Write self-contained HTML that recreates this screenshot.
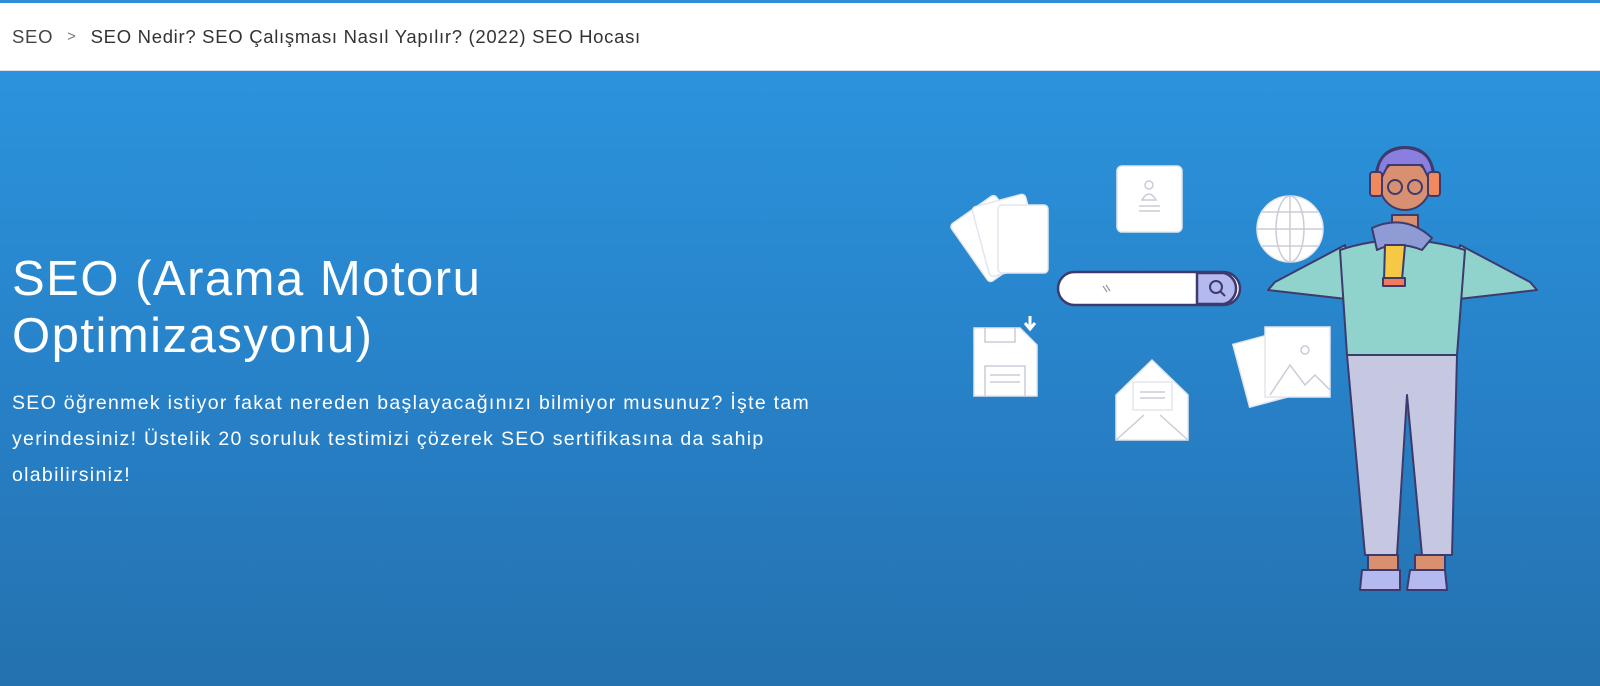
<!DOCTYPE html>
<html><head><meta charset="utf-8"><style>
*{margin:0;padding:0;box-sizing:border-box}
body{width:1600px;height:686px;overflow:hidden;font-family:"Liberation Sans",sans-serif;background:#fff}
.top{height:3px;background:#2e8fd6}
.hdr{height:68px;background:#fff;border-bottom:1px solid #dde3ea;display:flex;align-items:center;padding-left:12px;font-size:18.5px;color:#444;letter-spacing:.7px}
.hdr .sep{margin:0 14px;color:#777;font-size:15px}
.hdr b{font-weight:normal;color:#333}
.hero{position:absolute;top:71px;left:0;width:1600px;height:615px;background:linear-gradient(180deg,#2b93dc 0%,#2780c6 55%,#2471ae 100%)}
h1{position:absolute;left:12px;top:180px;color:#fff;font-weight:normal;font-size:49px;line-height:57px;letter-spacing:1.5px}
p{position:absolute;left:12px;top:314px;width:850px;color:#fff;font-size:19.5px;line-height:36px;letter-spacing:1.3px}
svg{position:absolute;left:0;top:0}
</style></head><body>
<div class="top"></div>
<div class="hdr">SEO<span class="sep">&gt;</span><b>SEO Nedir? SEO Çalışması Nasıl Yapılır? (2022) SEO Hocası</b></div>
<div class="hero">
<h1>SEO (Arama Motoru<br>Optimizasyonu)</h1>
<p>SEO öğrenmek istiyor fakat nereden başlayacağınızı bilmiyor musunuz? İşte tam yerindesiniz! Üstelik 20 soruluk testimizi çözerek SEO sertifikasına da sahip olabilirsiniz!</p>
</div>
<svg width="1600" height="686" viewBox="0 0 1600 686">
<g fill="#fff" stroke="#e3e6ee" stroke-width="1.5">
<rect x="965" y="205" width="55" height="70" rx="4" transform="rotate(-35 990 240)"/>
<rect x="980" y="200" width="55" height="72" rx="4" transform="rotate(-15 1005 236)"/>
<rect x="998" y="205" width="50" height="68" rx="4"/>
<rect x="1117" y="166" width="65" height="66" rx="5"/>
<circle cx="1290" cy="229" r="33"/>
<path d="M974 328h46l17 17v51h-63z"/>
<path d="M1116 395l36-35 36 35v45h-72z"/>
<rect x="1133" y="382" width="39" height="28"/>
<rect x="1240" y="335" width="65" height="65" transform="rotate(-15 1272 367)"/>
<rect x="1265" y="327" width="65" height="70"/>
</g>
<g fill="none" stroke="#c9ccd8" stroke-width="1.5">
<circle cx="1149" cy="185" r="4"/><path d="M1142 200q7-12 14 0zM1139 206h21M1139 211h21"/>
<ellipse cx="1290" cy="229" rx="14" ry="33"/><path d="M1257 229h66M1262 212h56M1262 246h56M1290 196v66"/>
<path d="M985 328v14h30v-14M985 396v-30h40v30M990 375h30M990 382h30"/>
<path d="M1116 440l28-25M1188 440l-28-25M1140 392h25M1140 398h25"/>
<path d="M1270 395l20-30 15 20 10-10 15 15"/><circle cx="1305" cy="350" r="4"/>
</g>
<path d="M1030 316v12M1025 323l5 6 5-6" stroke="#fff" stroke-width="3" fill="none"/>
<rect x="1058" y="272" width="182" height="33" rx="16.5" fill="#fff" stroke="#3d3a6e" stroke-width="2.5"/>
<path d="M1197 273h27a16 16 0 0 1 0 31h-27z" fill="#b4b9ef" stroke="#3d3a6e" stroke-width="2.5"/>
<circle cx="1216" cy="287" r="6" fill="none" stroke="#3d3a6e" stroke-width="2"/><path d="M1220 291l5 5" stroke="#3d3a6e" stroke-width="2"/>
<path d="M1103 286l4 6M1106 285l4 6" stroke="#999" stroke-width="1.2"/>
<g stroke="#3d3a6e" stroke-width="2" stroke-linejoin="round">
<path d="M1345 245 L1275 282 L1268 290 L1285 292 L1355 300z" fill="#8fd3cc"/>
<path d="M1460 245 L1530 282 L1537 290 L1520 292 L1450 300z" fill="#8fd3cc"/>
<path d="M1340 250q60-20 125 0l-8 105h-110z" fill="#8fd3cc"/>
<path d="M1347 355h110l-5 200h-30l-15-160-10 160h-32z" fill="#c5c8e0"/>
<path d="M1368 555h30v15h-30zM1415 555h30v15h-30z" fill="#d99070"/>
<path d="M1362 570h38v20h-40zM1410 570h35l2 20h-40z" fill="#b4b9ef"/>
<path d="M1392 215h26v22h-26z" fill="#d99070"/>
<circle cx="1405" cy="185" r="25" fill="#d99070"/>
<path d="M1378 185q-5-35 27-37q32 2 27 37l-10-20h-34z" fill="#8a7fe0"/>
<path d="M1375 185q0-38 30-38q30 0 30 38" fill="none"/>
<rect x="1370" y="172" width="12" height="24" rx="3" fill="#f08a5d"/>
<rect x="1428" y="172" width="12" height="24" rx="3" fill="#f08a5d"/>
<circle cx="1395" cy="187" r="7" fill="none"/><circle cx="1415" cy="187" r="7" fill="none"/>
<path d="M1372 228q33-15 60 10l-10 12q-25-10-45 0z" fill="#8e9bd4"/>
<path d="M1385 245h20l-3 35h-18z" fill="#f6c945"/>
<path d="M1383 278h22v8h-22z" fill="#f07a5a"/>
</g>
</svg>
</body></html>
